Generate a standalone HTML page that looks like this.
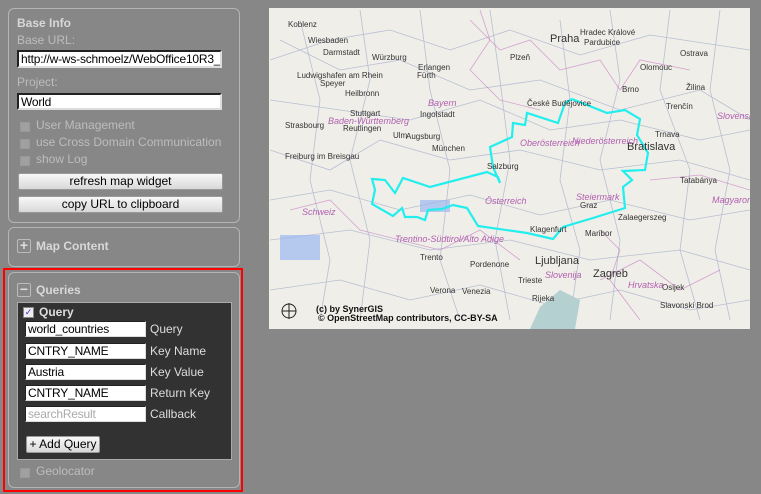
<!DOCTYPE html>
<html><head><style>
*{margin:0;padding:0;box-sizing:border-box}
body{width:761px;height:494px;background:#878787;font-family:"Liberation Sans",sans-serif;font-size:12px;position:relative;overflow:hidden;color:#c8c8c8}
.abs{position:absolute}
.panel{position:absolute;border:1px solid #b4b4b4;border-radius:6px}
.h{font-weight:bold;color:#d8d8d8;font-size:12px}
.inp{position:absolute;background:#fff;border:2px solid #222;border-right-color:#ddd;border-bottom-color:#ddd;color:#000;font-size:12px;padding-left:2px;line-height:14px;white-space:nowrap;overflow:hidden;letter-spacing:-0.2px}
.cb{position:absolute;width:10px;height:10px;background:#a0a0a0;border:1px solid #999}
.btn{position:absolute;background:linear-gradient(#f8f8f8,#d8d8d8);border:1px solid #999;border-radius:2px;color:#000;text-align:center;font-size:12px;line-height:15px}
.lbl{position:absolute;color:#bdbdbd;font-size:12px}
.dl{position:absolute;color:#ddd;font-size:12px}
.pm{position:absolute;width:14px;height:14px;border:1px solid #bbb;border-radius:2px;color:#ddd;font-size:14px;line-height:11px;text-align:center;font-weight:bold}
</style></head><body>
<div class="panel" style="left:8px;top:8px;width:232px;height:215px"></div>
<div class="abs h" style="left:17px;top:16px">Base Info</div>
<div class="lbl" style="left:17px;top:33px">Base URL:</div>
<div class="inp" style="left:17px;top:50px;width:205px;height:18px">http://w-ws-schmoelz/WebOffice10R3_latest</div>
<div class="lbl" style="left:17px;top:75px">Project:</div>
<div class="inp" style="left:17px;top:93px;width:205px;height:17px">World</div>
<div class="cb" style="left:20px;top:122px"></div><div class="lbl" style="left:36px;top:118px">User Management</div>
<div class="cb" style="left:20px;top:139px"></div><div class="lbl" style="left:36px;top:135px">use Cross Domain Communication</div>
<div class="cb" style="left:20px;top:156px"></div><div class="lbl" style="left:36px;top:152px">show Log</div>
<div class="btn" style="left:18px;top:173px;width:205px;height:17px">refresh map widget</div>
<div class="btn" style="left:18px;top:196px;width:205px;height:17px">copy URL to clipboard</div>

<div class="panel" style="left:8px;top:227px;width:232px;height:40px"></div>
<div class="pm" style="left:17px;top:239px">+</div>
<div class="abs h" style="left:36px;top:239px">Map Content</div>

<div class="abs" style="left:3px;top:268px;width:240px;height:224px;border:2px solid #f00"></div>
<div class="panel" style="left:8px;top:272px;width:232px;height:216px"></div>
<div class="pm" style="left:17px;top:283px">−</div>
<div class="abs h" style="left:36px;top:283px">Queries</div>
<div class="abs" style="left:17px;top:302px;width:215px;height:158px;background:#323232;border:1px solid #aaa"></div>
<div class="abs" style="left:23px;top:307px;width:11px;height:11px;background:#eee;border:1px solid #888;color:#33c;font-size:9px;line-height:9px;text-align:center">✓</div>
<div class="abs" style="left:39px;top:305px;color:#ddd;font-weight:bold">Query</div>
<div class="inp" style="left:25px;top:321px;width:121px;height:16px;border-width:1px">world_countries</div><div class="dl" style="left:150px;top:322px">Query</div>
<div class="inp" style="left:25px;top:343px;width:121px;height:16px;border-width:1px">CNTRY_NAME</div><div class="dl" style="left:150px;top:344px">Key Name</div>
<div class="inp" style="left:25px;top:364px;width:121px;height:16px;border-width:1px">Austria</div><div class="dl" style="left:150px;top:365px">Key Value</div>
<div class="inp" style="left:25px;top:385px;width:121px;height:16px;border-width:1px">CNTRY_NAME</div><div class="dl" style="left:150px;top:386px">Return Key</div>
<div class="inp" style="left:25px;top:406px;width:121px;height:16px;border-width:1px;color:#aaa">searchResult</div><div class="dl" style="left:150px;top:407px">Callback</div>
<div class="btn" style="left:26px;top:436px;width:74px;height:17px">+ Add Query</div>
<div class="cb" style="left:20px;top:468px"></div><div class="lbl" style="left:36px;top:464px">Geolocator</div>

<svg class="abs" style="left:269px;top:8px" width="481" height="321" viewBox="269 8 481 321">
<rect x="269" y="8" width="481" height="321" fill="#f0eee8"/>
<g fill="none" stroke="#a8b4cc" stroke-width="0.8" opacity="0.8">
<path d="M280 40 L340 70 L400 60 L470 90 L540 80 L620 110 L700 90 L750 120"/>
<path d="M270 150 L330 170 L380 140 L450 160 L520 150 L600 170 L680 160 L750 180"/>
<path d="M300 20 L320 100 L310 180 L330 260 L320 320"/>
<path d="M420 10 L430 90 L450 170 L440 260 L460 320"/>
<path d="M560 20 L570 100 L560 180 L580 250 L570 320"/>
<path d="M670 10 L660 90 L690 170 L680 250 L700 320"/>
<path d="M270 240 L350 230 L430 250 L510 240 L590 260 L680 250 L750 270"/>
<path d="M270 100 L340 110 L410 120 L480 100 L550 130 L620 120 L700 140 L750 130"/>
<path d="M270 200 L330 190 L400 210 L470 195 L540 215 L610 200 L690 220 L750 210"/>
<path d="M270 290 L340 280 L410 300 L480 285 L550 305 L620 290 L690 310 L750 300"/>
<path d="M360 10 L370 80 L350 160 L370 240 L360 320"/>
<path d="M490 10 L500 80 L510 160 L495 240 L510 320"/>
<path d="M610 10 L620 80 L600 160 L620 240 L610 320"/>
<path d="M720 10 L710 90 L730 170 L715 250 L730 320"/>
<path d="M270 60 L330 40 L390 30 L450 50 L510 30 L580 55 L650 35 L750 50"/>
</g>
<g fill="none" stroke="#c070c0" stroke-width="0.8" opacity="0.6">
<path d="M470 20 L500 50 L530 40 L560 70 L600 60 L620 90 L640 60 L690 70"/>
<path d="M290 210 L330 200 L360 230 L400 240 L440 250 L480 230 L520 260"/>
<path d="M600 280 L640 260 L680 290 L720 270"/>
<path d="M480 10 L490 40 L470 70 L500 100 L540 110"/>
<path d="M650 180 L700 175 L750 190"/>
<path d="M600 230 L620 250 L610 280 L640 320"/>
</g>
<path d="M540 307 L560 290 L580 300 L575 329 L530 329 Z" fill="#b5d0d0"/>
<g fill="#9bb8f0" opacity="0.7"><rect x="280" y="235" width="40" height="25"/><rect x="420" y="200" width="30" height="12"/></g>
<polyline fill="none" stroke="#22eeee" stroke-width="2.2" points="572,99 607,113 625,110 640,119 637,135 648,153 645,170 623,171 632,180 623,187 625,208 593,218 563,227 553,239 527,233 478,226 467,208 453,205 442,209 428,210 425,220 417,217 405,217 402,208 393,216 372,204 375,190 372,179 385,180 395,193 403,178 430,187 487,172 498,177 500,183 493,167 490,147 512,137 513,123 525,125 527,113 558,123 565,103 572,99"/>
<g font-family="Liberation Sans,sans-serif" fill="#333" font-size="8">
<text x="550" y="42" font-size="11">Praha</text>
<text x="627" y="150" font-size="11">Bratislava</text>
<text x="535" y="264" font-size="11">Ljubljana</text>
<text x="593" y="277" font-size="11">Zagreb</text>
<text x="288" y="27">Koblenz</text><text x="308" y="43">Wiesbaden</text><text x="323" y="55">Darmstadt</text>
<text x="372" y="60">Würzburg</text><text x="418" y="70">Erlangen</text><text x="417" y="78">Fürth</text>
<text x="297" y="78">Ludwigshafen am Rhein</text><text x="320" y="86">Speyer</text><text x="345" y="96">Heilbronn</text>
<text x="285" y="128">Strasbourg</text><text x="343" y="131">Reutlingen</text><text x="393" y="138">Ulm</text>
<text x="406" y="139">Augsburg</text><text x="432" y="151">München</text><text x="285" y="159">Freiburg im Breisgau</text>
<text x="420" y="117">Ingolstadt</text><text x="350" y="116">Stuttgart</text><text x="510" y="60">Plzeň</text>
<text x="527" y="106">České Budějovice</text><text x="580" y="35">Hradec Králové</text><text x="584" y="45">Pardubice</text>
<text x="640" y="70">Olomouc</text><text x="622" y="92">Brno</text><text x="680" y="56">Ostrava</text>
<text x="686" y="90">Žilina</text><text x="666" y="109">Trenčín</text><text x="655" y="137">Trnava</text>
<text x="487" y="169">Salzburg</text><text x="580" y="208">Graz</text><text x="530" y="232">Klagenfurt</text>
<text x="585" y="236">Maribor</text><text x="618" y="220">Zalaegerszeg</text><text x="680" y="183">Tatabánya</text>
<text x="420" y="260">Trento</text><text x="470" y="267">Pordenone</text><text x="430" y="293">Verona</text>
<text x="462" y="294">Venezia</text><text x="518" y="283">Trieste</text><text x="532" y="301">Rijeka</text>
<text x="662" y="290">Osijek</text><text x="660" y="308">Slavonski Brod</text>
</g>
<g font-family="Liberation Sans,sans-serif" fill="#b060b0" font-size="9" font-style="italic">
<text x="428" y="106">Bayern</text><text x="328" y="124">Baden-Württemberg</text><text x="520" y="146">Oberösterreich</text>
<text x="572" y="144">Niederösterreich</text><text x="485" y="204">Österreich</text><text x="576" y="200">Steiermark</text>
<text x="395" y="242">Trentino-Südtirol/Alto Adige</text><text x="302" y="215">Schweiz</text><text x="545" y="278">Slovenija</text>
<text x="628" y="288">Hrvatska</text><text x="712" y="203">Magyarország</text><text x="717" y="119">Slovensko</text>
</g>
<circle cx="289" cy="311" r="7" fill="none" stroke="#222"/>
<path d="M289 303 V319 M282 311 H296" stroke="#222" stroke-width="1"/>
<text x="316" y="312" font-family="Liberation Sans,sans-serif" font-size="9" font-weight="bold" fill="#111">(c) by SynerGIS</text>
<text x="318" y="321" font-family="Liberation Sans,sans-serif" font-size="9" font-weight="bold" fill="#111">© OpenStreetMap contributors, CC-BY-SA</text>
</svg>
</body></html>
